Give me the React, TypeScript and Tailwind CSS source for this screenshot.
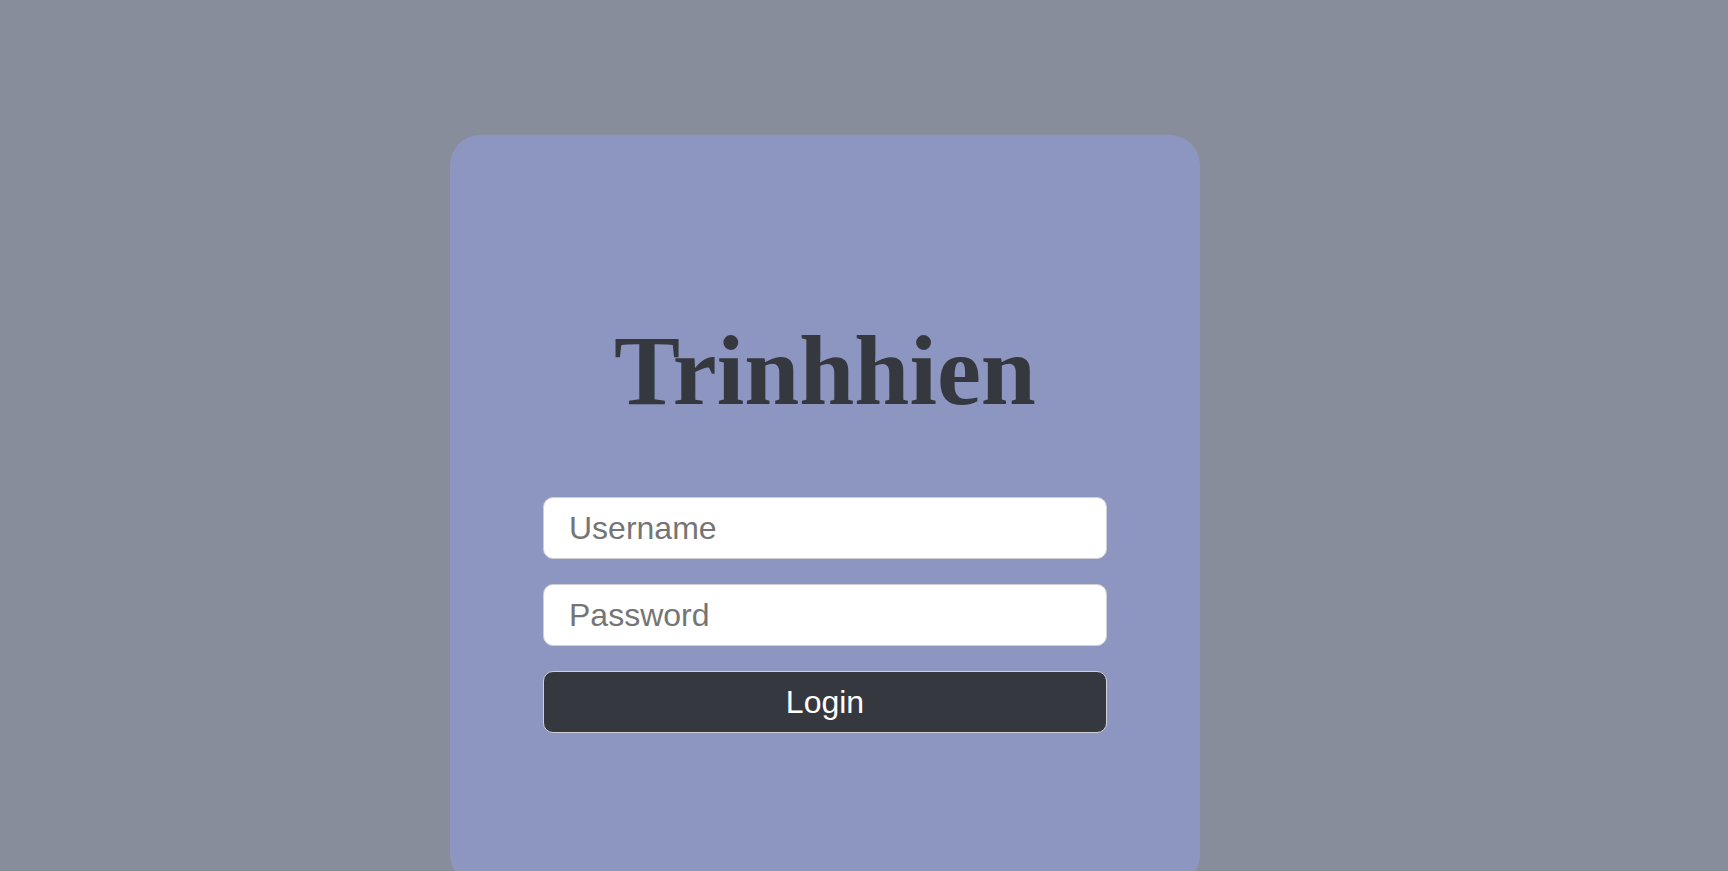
import React from "react";

export default function App() {
  return (
    <div className="min-h-[871px] w-full bg-[#878d9b] overflow-hidden font-['Liberation_Sans',Arial,sans-serif]">
      <div className="pt-[135px] pl-[450px]">
        <div className="w-[750px] h-[750px] rounded-[30px] bg-[#8c96c1] flex flex-col items-center pt-[186px]">
          <h1 className="m-0 text-[99px] leading-[100px] font-bold text-[#35383f] font-['Liberation_Serif','Times_New_Roman',serif]">
            Trinhhien
          </h1>
          <form className="mt-[76px] w-[564px] flex flex-col gap-[25px]" onSubmit={(e) => e.preventDefault()}>
            <input
              autoFocus
              type="text"
              placeholder="Username"
              className="h-[62px] w-full rounded-[10px] border border-[#cfcfd4] bg-white px-[25px] text-[32px] text-[#333] placeholder:text-[#757575] outline-none caret-black font-['Liberation_Sans',Arial,sans-serif]"
            />
            <input
              type="password"
              placeholder="Password"
              className="h-[62px] w-full rounded-[10px] border border-[#cfcfd4] bg-white px-[25px] text-[32px] text-[#333] placeholder:text-[#757575] outline-none font-['Liberation_Sans',Arial,sans-serif]"
            />
            <button
              type="submit"
              className="h-[62px] w-full rounded-[10px] border border-[#d0d0d8] bg-[#35383f] text-[32px] text-white font-['Liberation_Sans',Arial,sans-serif]"
            >
              Login
            </button>
          </form>
        </div>
      </div>
    </div>
  );
}
